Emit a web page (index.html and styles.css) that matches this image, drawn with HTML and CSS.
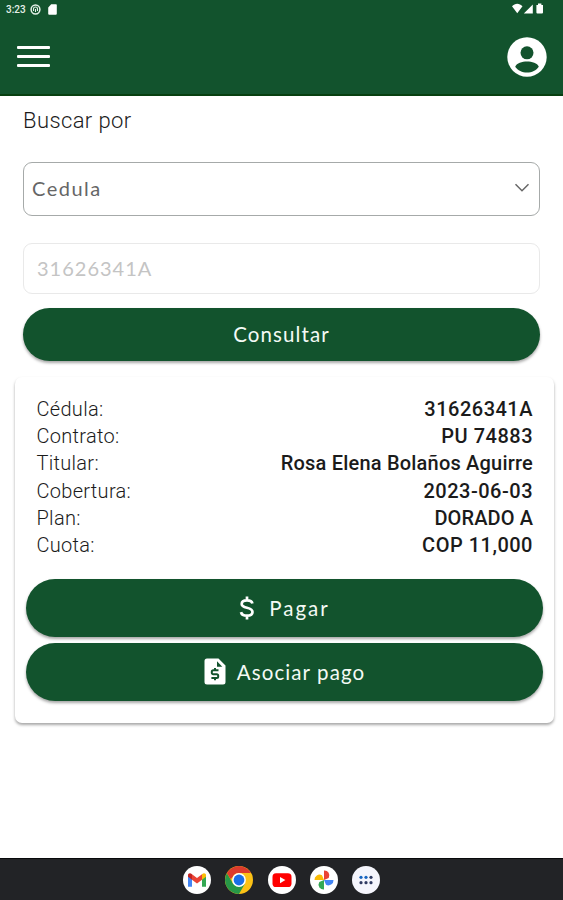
FILE: index.html
```html
<!DOCTYPE html>
<html lang="es">
<head>
<meta charset="utf-8">
<title>Buscar contrato</title>
<link rel="stylesheet" href="styles.css">
</head>
<body>
<header class="header">
  <div class="status">
    <div class="status-group">
      <span class="clock">3:23</span>
      <svg width="11" height="11" viewBox="0 0 11 11"><circle cx="5.5" cy="5.5" r="4.4" fill="none" stroke="#e4efe7" stroke-width="1.5"/><path d="M3.5 7V5a2 2 0 0 1 4 0v2M5.5 5v3" fill="none" stroke="#e4efe7" stroke-width="1.1"/></svg>
      <svg class="sd" width="9" height="11" viewBox="0 0 9 11"><path d="M3.2.3H8a.8.8 0 0 1 .8.8v8.600a1 1 0 0 1-1 1H1.200a1 1 0 0 1-1-1V3.400z" fill="#fff"/></svg>
    </div>
    <svg width="33" height="12" viewBox="0 0 33 12" fill="#fff"><path d="M0 3.200C3-.2 7.500-.2 10.500 3.200L5.250 10.300zM20.800 1.500v9h-9zM24.400 2h1.600V.6h3.400V2H31v7.500a1 1 0 0 1-1 1h-4.600a1 1 0 0 1-1-1z"/></svg>
  </div>
  <div class="toolbar">
    <div class="menu"><span></span><span></span><span></span></div>
    <svg width="40" height="40" viewBox="0 0 40 40"><circle cx="20" cy="20" r="19.700" fill="#fff"/><circle cx="20" cy="15.800" r="6.500" fill="#12532d"/><path d="M8.200 29.700c1.300-3.900 7-5.300 11.800-5.300s10.500 1.400 11.800 5.300C29.300 33.500 24.800 35.500 20 35.500S10.700 33.500 8.200 29.700z" fill="#12532d"/></svg>
  </div>
</header>
<main class="content">
  <div class="search">
    <div class="label">Buscar por</div>
    <div class="select"><span class="select-text">Cedula</span>
      <svg width="16" height="10" viewBox="0 0 16 10"><path d="M1.500 1.300 8 7.700l6.500-6.400" fill="none" stroke="#666" stroke-width="1.500"/></svg>
    </div>
    <div class="input"><span class="input-text">31626341A</span></div>
    <div class="button consult"><span class="t-consult">Consultar</span></div>
  </div>
  <section class="card">
    <dl class="details">
      <div class="row"><dt>Cédula:</dt><dd>31626341A</dd></div>
      <div class="row"><dt>Contrato:</dt><dd>PU 74883</dd></div>
      <div class="row"><dt>Titular:</dt><dd class="name">Rosa Elena Bolaños Aguirre</dd></div>
      <div class="row"><dt>Cobertura:</dt><dd>2023-06-03</dd></div>
      <div class="row"><dt>Plan:</dt><dd class="plan">DORADO A</dd></div>
      <div class="row"><dt>Cuota:</dt><dd>COP 11,000</dd></div>
    </dl>
    <div class="button pay">
      <svg width="16" height="24" viewBox="0 0 16 24"><path d="M13.400 7.400C13 5.400 11 4.300 8 4.300S2.700 5.700 2.700 8c0 5 10.800 2.600 10.800 8 0 2.400-2.200 3.700-5.500 3.700S2.500 18.300 2 16.100M8 .5v4M8 19.500v4" fill="none" stroke="#fff" stroke-width="2.700"/></svg>
      <span class="t-pay">Pagar</span>
    </div>
    <div class="button link">
      <svg width="22" height="27" viewBox="0 0 22 27"><path d="M3 .5h11.500l7 7V24a2.500 2.500 0 0 1-2.500 2.500H3A2.500 2.500 0 0 1 .5 24V3A2.500 2.500 0 0 1 3 .5z" fill="#fff"/><path d="M13 3.300v5.500h5.300z" fill="#12532d"/><path d="M14.500 12.300H9.300a1.500 1.500 0 0 0-1.500 1.500v.9a1.500 1.500 0 0 0 1.500 1.500h3.400a1.500 1.500 0 0 1 1.500 1.500v.8a1.500 1.500 0 0 1-1.500 1.500H7.400M11 10v2.300M11 20v2.300" fill="none" stroke="#12532d" stroke-width="2"/></svg>
      <span class="t-link">Asociar pago</span>
    </div>
  </section>
</main>
<nav class="dock">
  <svg width="28" height="28" viewBox="0 0 28 28"><circle cx="14" cy="14" r="14" fill="#fff"/><path d="M5 9.500v11.200h4v-8.500z" fill="#4285f4"/><path d="M23 9.500v11.200h-4v-8.500z" fill="#34a853"/><path d="M9 8.200v5.600l5 3.800 5-3.800V8.200l-5 3.900z" fill="#ea4335"/><path d="M5 9.300C5 7.200 7.300 6.700 9 8.200v5.600l-4-3z" fill="#c5221f"/><path d="M23 9.300c0-2.100-2.300-2.600-4-1.100v5.600l4-3z" fill="#fbbc04"/></svg>
  <svg width="28" height="28" viewBox="0 0 28 28"><circle cx="14" cy="14" r="14" fill="#fbc116"/><path d="M1.880 7A14 14 0 0 0 14 28l6.060-10.500L7.940 17.500z" fill="#279847"/><path d="M1.880 7A14 14 0 0 1 26.120 7H14a7 7 0 0 0-6.400 4.200L5.500 13z" fill="#dc3b2d"/><circle cx="14" cy="14" r="6.900" fill="#fff"/><circle cx="14" cy="14" r="5.400" fill="#1a6fe8"/></svg>
  <svg width="28" height="28" viewBox="0 0 28 28"><circle cx="14" cy="14" r="14" fill="#fff"/><rect x="4.500" y="7.300" width="19" height="13.700" rx="3.600" fill="#f00"/><path d="m12 11 5.400 3.100L12 17.200z" fill="#fff"/></svg>
  <svg width="28" height="28" viewBox="0 0 28 28"><circle cx="14" cy="14" r="14" fill="#fff"/><path d="M14 14V4.500a5 5 0 0 1 4.700 7.500L14 14z" fill="#ea4335"/><path d="M14 14h9.500a5 5 0 0 1-7.500 4.700z" fill="#4285f4"/><path d="M14 14v9.500a5 5 0 0 1-4.700-7.500z" fill="#34a853"/><path d="M14 14H4.500A5 5 0 0 1 12 9.300z" fill="#fbbc04"/></svg>
  <svg width="28" height="28" viewBox="0 0 28 28"><circle cx="14" cy="14" r="14" fill="#f5f5fc"/><g fill="#303b62"><circle cx="9" cy="11.300" r="1.600" fill="#1764c0"/><circle cx="14" cy="11.300" r="1.600" fill="#1764c0"/><circle cx="19" cy="11.300" r="1.600"/><circle cx="9" cy="16.700" r="1.600"/><circle cx="14" cy="16.700" r="1.600"/><circle cx="19" cy="16.700" r="1.600"/></g></svg>
</nav>
</body>
</html>
```

FILE: styles.css
```css
* { box-sizing: border-box; }
body {
  margin: 0;
  height: 900px;
  display: flex;
  flex-direction: column;
  background: #fff;
  font-family: Roboto, "Liberation Sans", sans-serif;
  color: #1b1b1b;
}
svg { display: block; flex: none; }
.header {
  height: 96px;
  background: #12532d;
  border-bottom: 2px solid #073f10;
}
.status {
  height: 18px;
  padding: 0 18px 0 6px;
  display: flex;
  align-items: center;
  justify-content: space-between;
}
.status-group { display: flex; align-items: center; gap: 5px; }
.clock { font-size: 10px; font-weight: 500; color: #e4efe7; width: 19px; }
.sd { margin-left: 2px; }
.toolbar {
  height: 77px;
  padding: 0 16px 0 17px;
  display: flex;
  align-items: center;
  justify-content: space-between;
}
.menu { width: 33px; display: flex; flex-direction: column; gap: 6px; }
.menu span { height: 3px; background: #fff; border-radius: 1px; }
.content { flex: 1; }
.search { padding: 11px 23px 0; }
.label { height: 28px; line-height: 28px; font-size: 22px; font-weight: 300; letter-spacing: .4px; }
.select, .input {
  display: flex;
  align-items: center;
  font-family: Lato, sans-serif;
  border-radius: 9px;
}
.select {
  height: 54px;
  margin-top: 27px;
  padding: 0 9px 2px 8px;
  justify-content: space-between;
  border: 1px solid #a6aaa9;
  font-size: 20px;
  color: #666;
}
.input {
  height: 51px;
  margin-top: 27px;
  padding: 0 13px 2px;
  border: 1.500px solid #e9e9e9;
  font-size: 20px;
  color: #c4c4c4;
}
.select-text { letter-spacing: 1.500px; }
.input-text { letter-spacing: 1px; }
.button {
  display: flex;
  align-items: center;
  justify-content: center;
  border-radius: 30px;
  background: #12532d;
  color: #f4faf5;
  font-family: Lato, sans-serif;
  font-size: 20.500px;
  box-shadow: 0 2px 3px rgba(0, 0, 0, .35);
}
.t-consult, .t-link { letter-spacing: 1.100px; }
.t-pay { letter-spacing: 2px; }
.consult { height: 53px; margin-top: 14px; padding-bottom: 2px; }
.card {
  height: 346px;
  margin: 16px 9px 0 15px;
  padding: 18.500px 11px 0;
  border-radius: 7px;
  box-shadow: 0 2px 3px rgba(0, 0, 0, .35);
}
.details { margin: 0 10px 0 10.500px; }
.row { display: flex; justify-content: space-between; height: 27.400px; line-height: 27.400px; font-size: 20px; }
dt { font-weight: 300; letter-spacing: .3px; }
dd { margin: 0; font-weight: 500; letter-spacing: .5px; }
.name { letter-spacing: .2px; }
.plan { letter-spacing: .1px; }
.pay { height: 58px; margin-top: 19px; gap: 14px; }
.link { height: 58px; margin-top: 6px; gap: 11px; }
.dock {
  height: 42px;
  background: #222326;
  border-top: 1px solid #08090b;
  display: flex;
  align-items: center;
  justify-content: center;
  gap: 14.200px;
}
```
